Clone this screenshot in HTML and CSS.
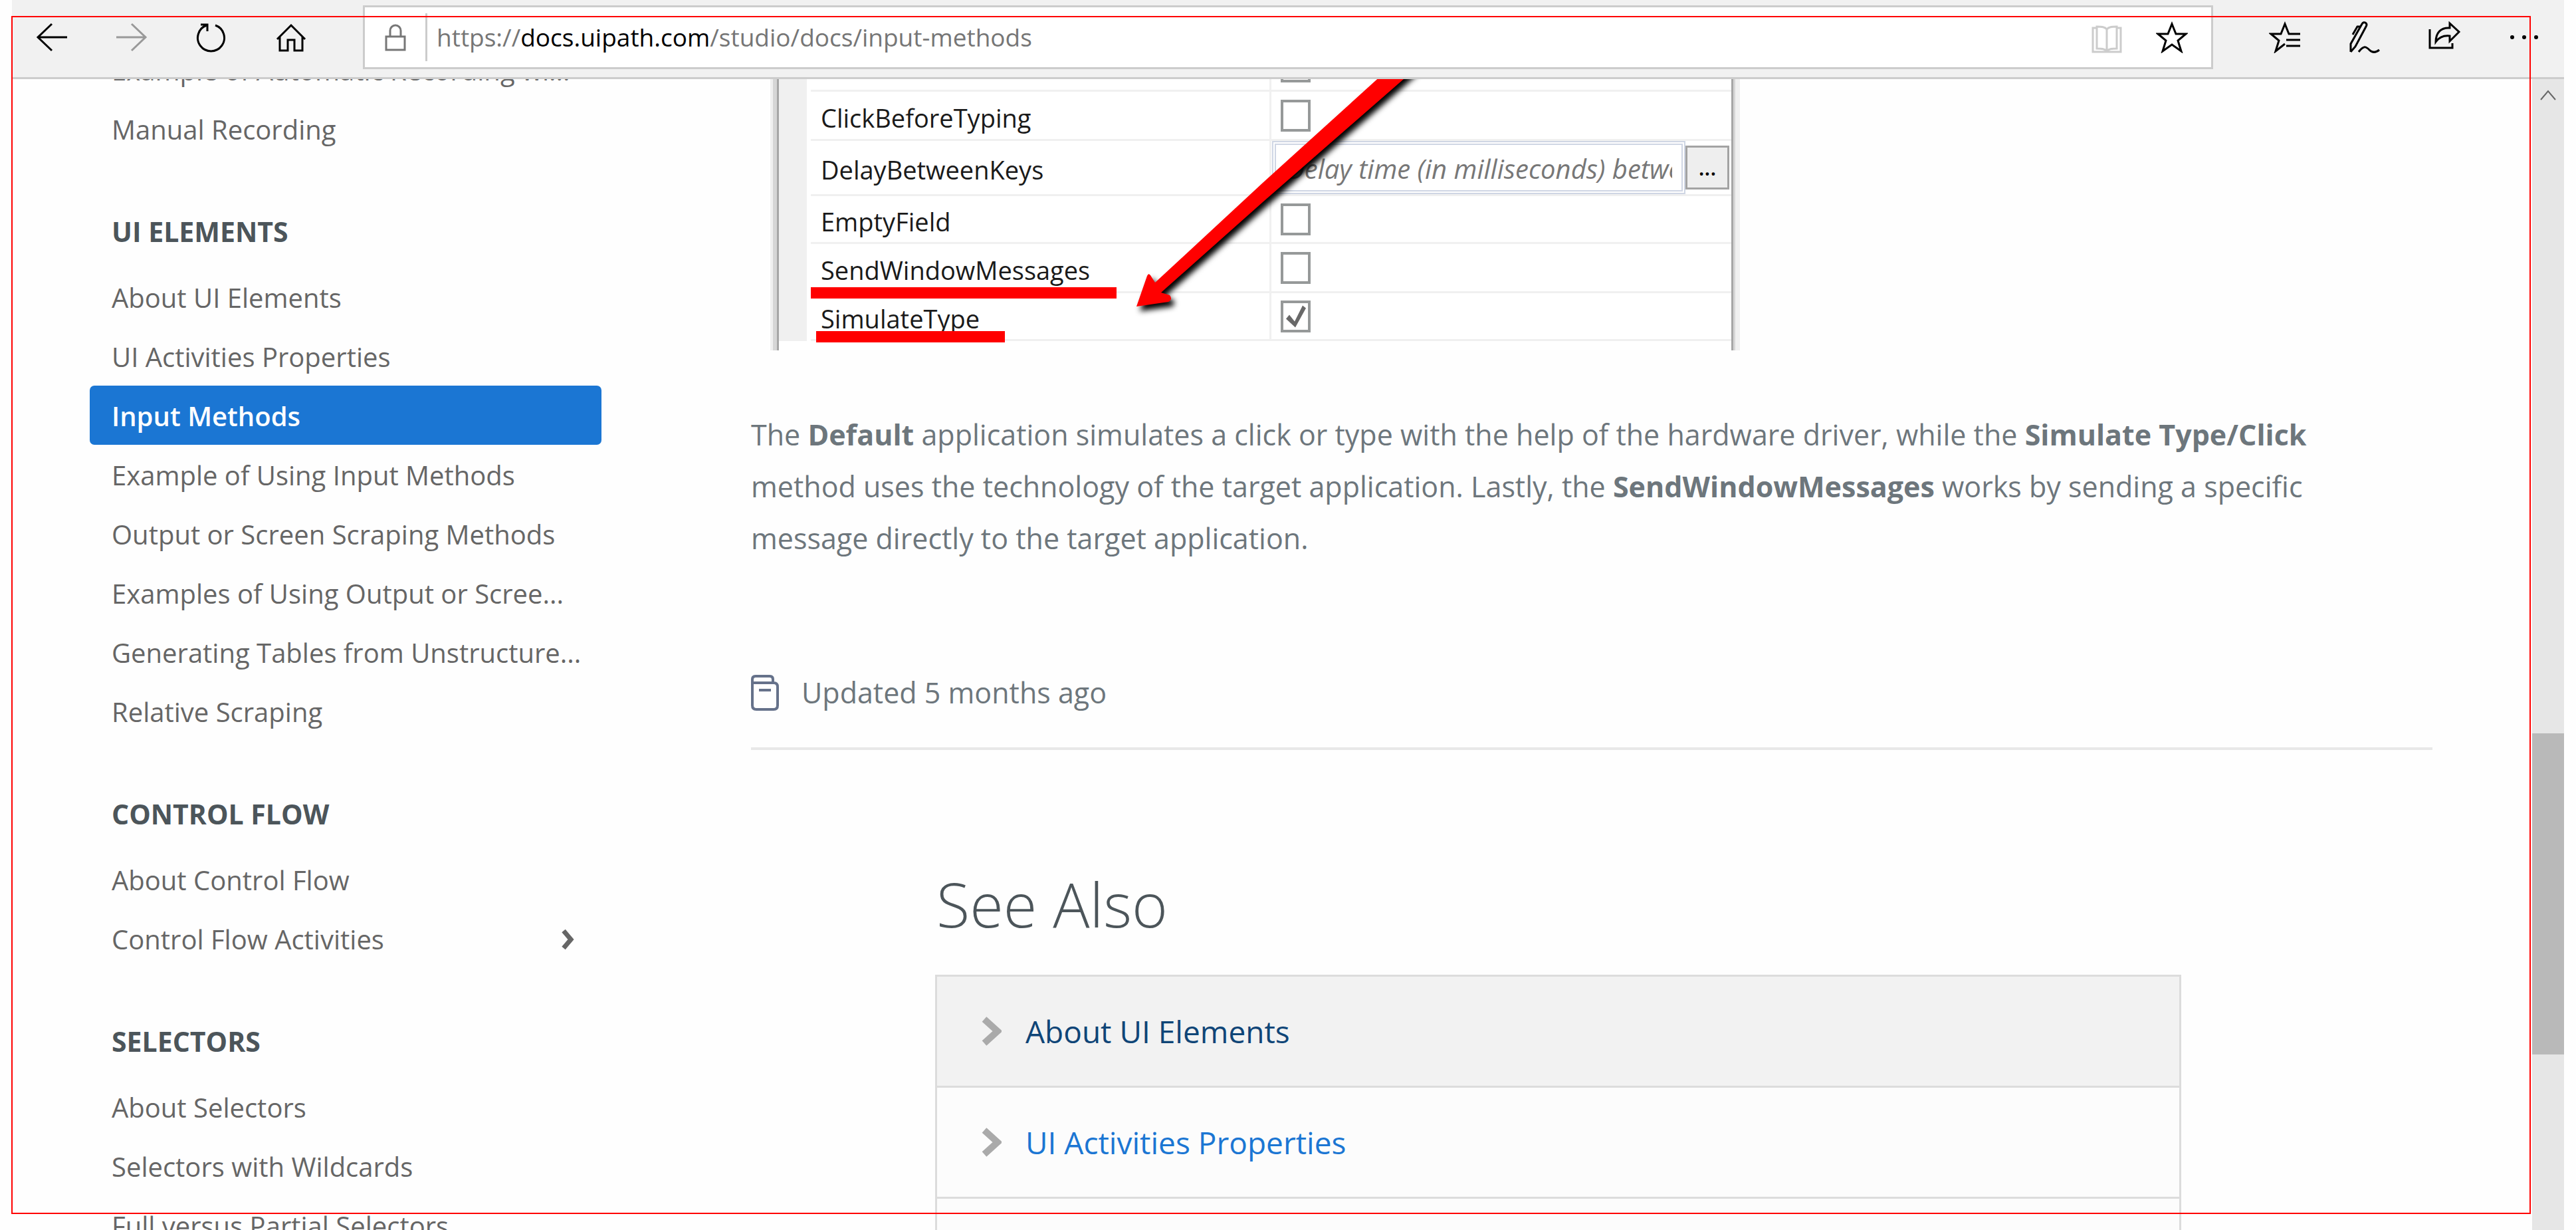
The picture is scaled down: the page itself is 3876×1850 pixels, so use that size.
FILE: index.html
```html
<!DOCTYPE html>
<html lang="en">
<head>
<meta charset="utf-8">
<title>Input Methods</title>
<link rel="stylesheet" href="styles.css">
</head>
<body>
<header class="toolbar">
  <button class="tool" aria-label="Back"><svg class="icon" viewBox="0 0 48 48"><path d="M24 4 3 24l21 20M3 24h44"/></svg></button>
  <button class="tool tool-off" aria-label="Forward"><svg class="icon" viewBox="0 0 48 48"><path d="M24 4l21 20-21 20M45 24H1"/></svg></button>
  <button class="tool" aria-label="Refresh"><svg class="icon" viewBox="0 0 48 48"><path d="M17 6A20 20 0 1 0 30 6M8 5h10v10"/></svg></button>
  <button class="tool" aria-label="Home"><svg class="icon" viewBox="0 0 48 48"><path d="M3 27 24 6l21 21M7 23v21h12V28h10v16h12V23"/></svg></button>
  <div class="address">
    <span class="lock"><svg class="icon" viewBox="0 0 48 48"><path d="M10 23h28v20H10zM16 23V14a8 8 0 0 1 16 0v9"/></svg></span>
    <div class="url" role="textbox" aria-label="Address" contenteditable="true" spellcheck="false">https://<span class="host">docs.uipath.com</span>/studio/docs/input-methods</div>
    <button class="tool tool-faint" aria-label="Reading view"><svg class="icon" viewBox="0 0 48 48"><path d="M9 10H3v36h42V10h-6M24 12c-3-4-9-4-15-4v33c6 0 12 0 15 4 3-4 9-4 15-4V8c-6 0-12 0-15 4zM24 12v33"/></svg></button>
    <button class="tool" aria-label="Add to favorites"><svg class="icon" viewBox="0 0 48 48"><path d="M24 4l6 15h15L33 29l5 16-14-10-14 10 5-16L3 19h15z"/></svg></button>
  </div>
  <button class="tool" aria-label="Favorites"><svg class="icon" viewBox="0 0 48 48"><path d="M47 19H30L24 4l-6 15H3l12 10-5 16 14-11M26 28h21M26 37h21"/></svg></button>
  <button class="tool" aria-label="Notes"><svg class="icon" viewBox="0 0 48 48"><path d="M3 46V34L20 4c3-5 9-1 6 4L10 38 3 46M6 20l7-12h4M15 46c8-11 12-7 16-3s9 5 15 0"/></svg></button>
  <button class="tool" aria-label="Share"><svg class="icon" viewBox="0 0 48 48"><path d="M2 12v28h34v-7M32 3l14 13-14 14v-8c-9-1-16 2-21 9C11 17 19 9 32 10z"/></svg></button>
  <button class="tool" aria-label="More"><svg class="icon dots" viewBox="0 0 48 48"><circle cx="6" cy="24" r="3"/><circle cx="24" cy="24" r="3"/><circle cx="42" cy="24" r="3"/></svg></button>
</header>

<div class="view">
  <nav class="sidebar">
    <ul class="links">
      <li><a href="#">Example of Automatic Recording wi...</a></li>
      <li><a href="#">Manual Recording</a></li>
    </ul>
    <h2>UI ELEMENTS</h2>
    <ul class="links">
      <li><a href="#">About UI Elements</a></li>
      <li><a href="#">UI Activities Properties</a></li>
      <li><a class="current" href="#">Input Methods</a></li>
      <li><a href="#">Example of Using Input Methods</a></li>
      <li><a href="#">Output or Screen Scraping Methods</a></li>
      <li><a href="#">Examples of Using Output or Scree...</a></li>
      <li><a href="#">Generating Tables from Unstructure...</a></li>
      <li><a href="#">Relative Scraping</a></li>
    </ul>
    <h2>CONTROL FLOW</h2>
    <ul class="links">
      <li><a href="#">About Control Flow</a></li>
      <li><a href="#">Control Flow Activities<svg class="expand" viewBox="0 0 20 32"><path d="M4 3l11 13L4 29"/></svg></a></li>
    </ul>
    <h2>SELECTORS</h2>
    <ul class="links">
      <li><a href="#">About Selectors</a></li>
      <li><a href="#">Selectors with Wildcards</a></li>
      <li><a href="#">Full versus Partial Selectors</a></li>
    </ul>
  </nav>

  <main class="content">
    <figure class="panel">
      <div class="gutter"></div>
      <table class="props">
        <tr><th class="dim"><label for="p1">Activate</label></th><td><input class="check" type="checkbox" id="p1"></td></tr>
        <tr><th><label for="p2">ClickBeforeTyping</label></th><td><input class="check" type="checkbox" id="p2"></td></tr>
        <tr class="tall"><th><label for="p3">DelayBetweenKeys</label></th><td><div class="field"><input class="delay" type="text" id="p3" placeholder="Delay time (in milliseconds) between"><button class="browse">...</button></div></td></tr>
        <tr class="short"><th><label for="p4">EmptyField</label></th><td><input class="check" type="checkbox" id="p4"></td></tr>
        <tr><th><label for="p5">SendWindowMessages</label></th><td><input class="check" type="checkbox" id="p5"></td></tr>
        <tr class="short"><th><label for="p6">SimulateType</label></th><td><input class="check" type="checkbox" id="p6" checked></td></tr>
      </table>
      <span class="mark mark-send"></span>
      <span class="mark mark-simulate"></span>
      <svg class="arrow" viewBox="0 0 1459 463"><path d="M551 397l16-46q2-5 5-1l7 11L741 211 974 0h42L741 240 588 376l13 4q5 6-2 10z"/></svg>
    </figure>
    <p class="text">The <strong>Default</strong> application simulates a click or type with the help of the hardware driver, while the <strong>Simulate Type/Click</strong> method uses the technology of the target application. Lastly, the <strong>SendWindowMessages</strong> works by sending a specific message directly to the target application.</p>
    <div class="updated">
      <svg class="doc" viewBox="0 0 42 54"><path d="M2 12V7q0-5 5-5h21q5 0 5 5v5M2 12h32q6 0 6 6v28q0 6-6 6H8q-6 0-6-6zM12 23h18"/></svg>
      <span>Updated 5 months ago</span>
    </div>
    <section class="also">
      <h1>See Also</h1>
      <ul>
        <li class="hover"><svg class="chev" viewBox="0 0 30 44"><path d="M4 4l20 18L4 40"/></svg><a href="#">About UI Elements</a></li>
        <li><svg class="chev" viewBox="0 0 30 44"><path d="M4 4l20 18L4 40"/></svg><a href="#">UI Activities Properties</a></li>
        <li></li>
      </ul>
    </section>
  </main>

  <div class="scrollbar">
    <button class="up" aria-label="Scroll up"><svg viewBox="0 0 24 16"><path d="M1 15 12 2l11 13"/></svg></button>
    <div class="before"></div>
    <div class="thumb"></div>
    <div class="after"></div>
  </div>
</div>
<div class="frame"></div>
</body>
</html>
```
FILE: styles.css
```css
* { box-sizing: border-box; }

body {
  margin: 0;
  height: 100vh;
  overflow: hidden;
  display: flex;
  flex-direction: column;
  padding: 0 18px;
  background: #fefefe;
  color: #666;
  font-family: "Open Sans", "Noto Sans", sans-serif;
  font-size: 40px;
}

ul { list-style: none; margin: 0; padding: 0; }
a { color: inherit; text-decoration: none; }
button { border: 0; padding: 0; background: none; font: inherit; }
svg { display: block; fill: none; stroke: currentColor; }

/* browser toolbar */
.toolbar {
  display: flex;
  flex: none;
  padding: 8px 0 12px;
  background: #f1f1f1;
  border-bottom: 3px solid #ccc;
}
.tool {
  width: 120px;
  height: 96px;
  display: flex;
  align-items: center;
  justify-content: center;
  color: #000;
}
.tool-off { color: #999; }
.tool-faint { color: #ccc; }
.icon { width: 48px; height: 48px; stroke-width: 3; }
.dots { fill: currentColor; stroke: none; }
.address {
  flex: 1;
  display: flex;
  align-items: center;
  height: 96px;
  margin: 0 48px;
  padding-right: 10px;
  background: #fff;
  border: 3px solid #ccc;
}
.address .tool { width: 98px; height: 90px; }
.lock {
  width: 94px;
  height: 72px;
  display: flex;
  align-items: center;
  justify-content: center;
  color: #777;
  border-right: 3px solid #ccc;
}
.url {
  flex: 1;
  padding-left: 14px;
  color: #767676;
  font-size: 37px;
  line-height: 72px;
  white-space: nowrap;
}
.host { color: #000; }

/* page viewport */
.view { flex: 1; min-height: 0; display: flex; overflow: hidden; }

.sidebar { width: 887px; flex: none; margin-top: -59px; padding-left: 117px; }
.sidebar h2 {
  margin: 82px 0 26px;
  padding-left: 33px;
  color: #4c555a;
  font-size: 41px;
  font-weight: 700;
  line-height: 56px;
}
.links a {
  display: flex;
  align-items: center;
  justify-content: space-between;
  height: 89px;
  padding: 2px 41px 0 33px;
  border-radius: 7px;
  white-space: nowrap;
}
.links .current { background: #1b76d3; color: #fff; font-weight: 600; }
.expand { width: 20px; height: 32px; stroke-width: 7; }

.content { flex: 1; min-width: 0; padding: 0 150px 0 225px; }

/* properties panel */
.panel {
  position: relative;
  display: flex;
  width: 1459px;
  margin: -55px 0 0 29px;
  padding: 0 13px 14px;
  background: linear-gradient(to right, #f0f0f0 4px, #d6d6d6 4px 10px, #a6a6a6 10px 13px, #fff 13px calc(100% - 13px), #a6a6a6 calc(100% - 13px) calc(100% - 10px), #d6d6d6 calc(100% - 10px) calc(100% - 7px), #f0f0f0 calc(100% - 7px));
}
.gutter { width: 42px; margin-right: 6px; background: #f0f0f0; }
.props {
  flex: 1;
  table-layout: fixed;
  border-spacing: 0;
  color: #1a1a1a;
  font-size: 38px;
}
.props th, .props td { height: 74px; padding: 0; border-bottom: 3px solid #f0f0f0; }
.props th {
  width: 693px;
  padding: 6px 0 0 15px;
  border-right: 3px solid #f0f0f0;
  font-weight: 400;
  line-height: 52px;
  text-align: left;
}
.props .dim { color: #999; }
.props .tall th, .props .tall td { height: 83px; }
.props .short th, .props .short td { height: 72px; }
.check {
  appearance: none;
  display: block;
  width: 45px;
  height: 48px;
  margin: 0 0 0 14px;
  background: #fff;
  border: 4px solid #969999;
}
.check:checked::before {
  content: "";
  display: block;
  width: 37px;
  height: 40px;
  background: #686868;
  clip-path: polygon(4px 24px, 9px 18px, 17px 28px, 29px 4px, 34px 8px, 18px 37px);
}
.field { display: flex; align-items: center; padding-left: 1px; }
.delay {
  width: 622px;
  height: 80px;
  padding: 2px 14px 0 16px;
  background: #fff;
  border: 6px double #cfd6e4;
  color: #777;
  font: italic 40px "Open Sans", "Noto Sans", sans-serif;
}
.delay::placeholder { color: #777; }
.browse {
  width: 66px;
  height: 66px;
  background: #eee;
  border: 3px solid #a3a3a3;
  color: #000;
  font-size: 32px;
  font-weight: 600;
  line-height: 56px;
}
.mark { position: absolute; height: 17px; background: #f00; }
.mark-send { left: 61px; top: 368px; width: 460px; }
.mark-simulate { left: 69px; top: 434px; width: 284px; }
.arrow {
  position: absolute;
  left: 0;
  top: 0;
  width: 1459px;
  height: 463px;
  fill: #f00;
  stroke: none;
  filter: drop-shadow(5px 7px 4px #000);
}

/* article */
.text {
  margin: 88px 0 0;
  padding-right: 60px;
  color: #6d767c;
  font-size: 43px;
  line-height: 78px;
}
.updated {
  display: flex;
  align-items: center;
  gap: 34px;
  margin-top: 154px;
  padding-bottom: 43px;
  border-bottom: 4px solid #e8e8e8;
  color: #6d767c;
  font-size: 43px;
  line-height: 78px;
}
.doc { width: 42px; height: 54px; color: #65718a; stroke-width: 4; }

.also { margin: 172px 378px 0 277px; }
.also h1 {
  margin: 0 0 46px;
  padding-left: 2px;
  color: #4c555a;
  font-size: 92px;
  font-weight: 300;
  line-height: 120px;
}
.also ul { border: 3px solid #dcdcdc; border-bottom: 0; }
.also li {
  display: flex;
  align-items: center;
  gap: 36px;
  height: 167px;
  padding-left: 67px;
  background: #fcfcfc;
  border-bottom: 3px solid #dcdcdc;
  color: #1b76d3;
  font-size: 46px;
}
.also .hover { background: #f2f2f2; color: #0f4577; }
.chev { width: 30px; height: 44px; color: #aaa; stroke-width: 10; }

/* scrollbar */
.scrollbar { width: 48px; flex: none; display: flex; flex-direction: column; background: #e6e6e6; }
.up { height: 40px; display: flex; align-items: flex-end; justify-content: center; padding-bottom: 8px; color: #666; }
.up svg { width: 24px; height: 16px; stroke-width: 2; }
.before { flex: 944; }
.thumb { flex: 483; background: #b9b9b9; }
.after { flex: 264; }

/* selection outline drawn over the window */
.frame {
  position: fixed;
  inset: 24px 68px 24px 17px;
  border: 2px solid #f00;
  pointer-events: none;
}
```
